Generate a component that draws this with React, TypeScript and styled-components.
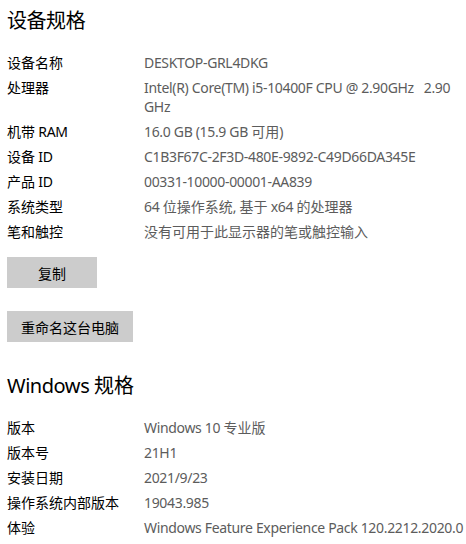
import { FC } from "react";
import styled, { createGlobalStyle } from "styled-components";

const GlobalStyle = createGlobalStyle`
  html, body {
    margin: 0;
    padding: 0;
    background: #ffffff;
  }

  body {
    font-family: "Noto Sans", "Noto Sans CJK SC", sans-serif;
    color: #000000;
  }
`;

interface SpecItem {
  label: string;
  value: string;
}

const deviceSpecs: SpecItem[] = [
  { label: "设备名称", value: "DESKTOP-GRL4DKG" },
  { label: "处理器", value: "Intel(R) Core(TM) i5-10400F CPU @ 2.90GHz   2.90 GHz" },
  { label: "机带 RAM", value: "16.0 GB (15.9 GB 可用)" },
  { label: "设备 ID", value: "C1B3F67C-2F3D-480E-9892-C49D66DA345E" },
  { label: "产品 ID", value: "00331-10000-00001-AA839" },
  { label: "系统类型", value: "64 位操作系统, 基于 x64 的处理器" },
  { label: "笔和触控", value: "没有可用于此显示器的笔或触控输入" },
];

const windowsSpecs: SpecItem[] = [
  { label: "版本", value: "Windows 10 专业版" },
  { label: "版本号", value: "21H1" },
  { label: "安装日期", value: "2021/9/23" },
  { label: "操作系统内部版本", value: "19043.985" },
  { label: "体验", value: "Windows Feature Experience Pack 120.2212.2020.0" },
];

// Latin runs are tightened to match the narrower system font; CJK runs keep full width.
const Text: FC<{ children: string }> = ({ children }) => (
  <>
    {children.split(/([\u3000-\u9fff]+)/).map((part, i) =>
      /[\u3000-\u9fff]/.test(part) ? <Cjk key={i}>{part}</Cjk> : part
    )}
  </>
);

const SpecList: FC<{ items: SpecItem[] }> = ({ items }) => (
  <List>
    {items.map((item) => (
      <Row key={item.label}>
        <Label>
          <Text>{item.label}</Text>
        </Label>
        <Value>
          <Text>{item.value}</Text>
        </Value>
      </Row>
    ))}
  </List>
);

const App: FC = () => {
  return (
    <Page>
      <GlobalStyle />
      <Title>设备规格</Title>
      <SpecList items={deviceSpecs} />
      <Actions>
        <Button>复制</Button>
        <Button>重命名这台电脑</Button>
      </Actions>
      <Title $spaced>
        <Text>Windows 规格</Text>
      </Title>
      <SpecList items={windowsSpecs} />
    </Page>
  );
};

export default App;

const Page = styled.div`
  width: 466px;
  height: 544px;
  overflow: hidden;
  box-sizing: border-box;
  padding: 7px 0 0 7px;
`;

const Title = styled.h2<{ $spaced?: boolean }>`
  margin: ${({ $spaced }) => ($spaced ? "30px" : "0")} 0 0;
  font-size: 20px;
  line-height: 28px;
  font-weight: 400;
  letter-spacing: -0.45px;
  color: #000000;
`;

const Cjk = styled.span`
  letter-spacing: 0;
`;

const List = styled.div`
  margin-top: 15px;
  display: flex;
  flex-direction: column;
`;

const Row = styled.div`
  display: grid;
  grid-template-columns: 137px 1fr;
  padding: 3px 0;
  font-size: 14px;
  line-height: 19px;
  letter-spacing: -0.33px;
`;

const Label = styled.div`
  color: #000000;
`;

const Value = styled.div`
  color: #5c5c5c;
  white-space: pre-wrap;
`;

const Actions = styled.div`
  margin-top: 13px;
  display: flex;
  flex-direction: column;
  align-items: flex-start;
  gap: 23px;
`;

const Button = styled.button`
  min-width: 90px;
  height: 31px;
  padding: 0 14px;
  border: none;
  background: #cccccc;
  color: #000000;
  font-family: inherit;
  font-size: 14px;
`;
